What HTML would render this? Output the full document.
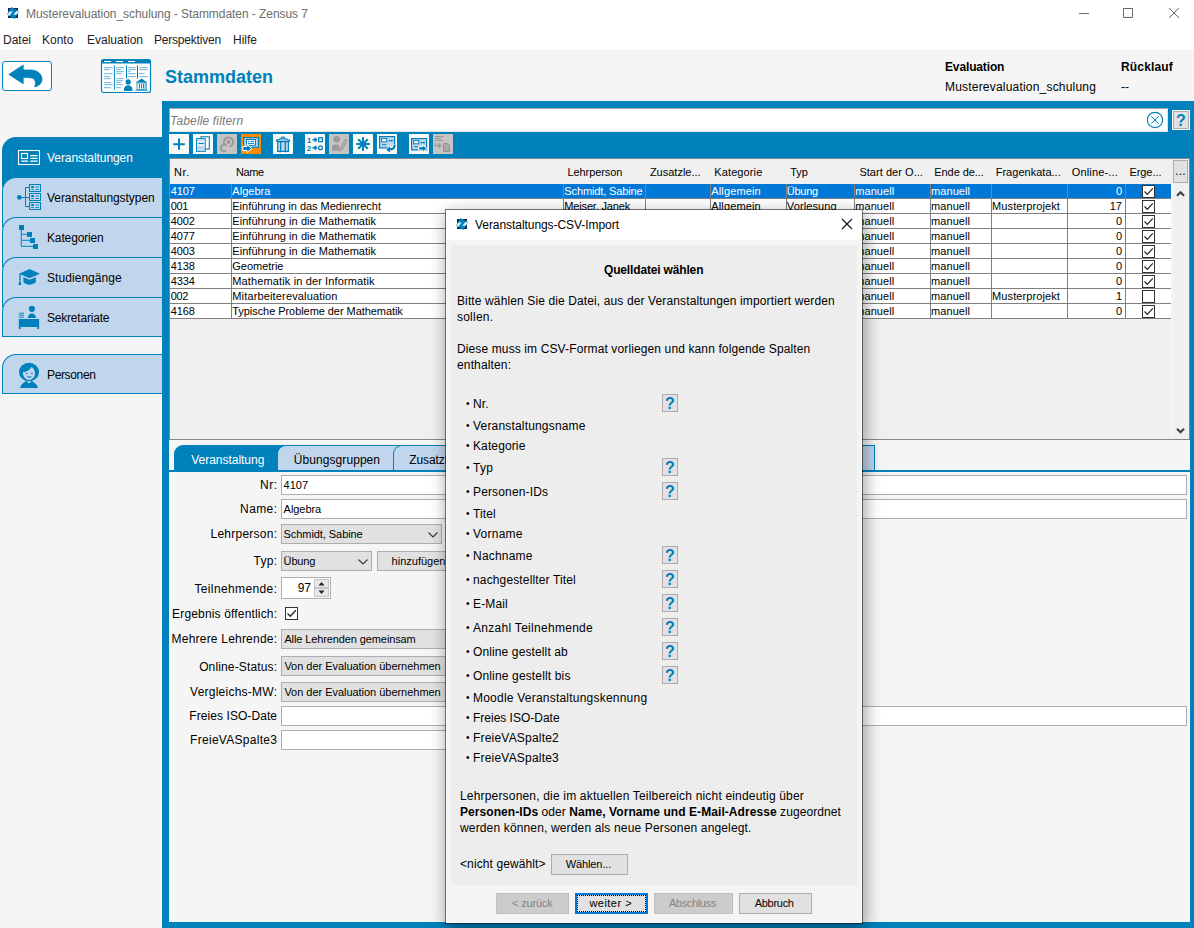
<!DOCTYPE html>
<html lang="de"><head><meta charset="utf-8"><title>Musterevaluation_schulung - Stammdaten - Zensus 7</title>
<style>
*{box-sizing:border-box;margin:0;padding:0}
html,body{width:1194px;height:928px;overflow:hidden;background:#f5f5f5;font-family:"Liberation Sans",sans-serif;font-size:12px;color:#000}
#app{position:relative;width:1194px;height:928px;overflow:hidden}
.t{position:absolute;white-space:nowrap;line-height:14px}
#titlebar{left:0;top:0;width:1194px;height:50px;background:#fff}
.menu{top:33px;font-size:12px;color:#222}
.ltab{position:absolute;left:2px;width:160px;height:41px;background:#c0d6ed;border:1px solid #0081bb;border-right:none;border-radius:14px 0 0 0}
.ltab.act{background:#0081bb}
.ltab .t{left:44px;top:13px;font-size:12px}
.ltab.act .t{color:#fff}
.ltab svg{position:absolute}
#blue{position:absolute;left:162px;top:101px;width:1032px;height:827px;background:#0081bb}
.ibtn{position:absolute;top:134px;width:20px;height:20px;background:#f8f8f8}
.ibtn.dis{background:#c6c4c2}
.ibtn.or{background:#ff8c00}
.ibtn svg{position:absolute;left:0;top:0}
#tbl{position:absolute;left:169px;top:158px;width:1021px;height:282px;background:#f0f0f0;border:1px solid #828790}
.th{position:absolute;top:166px;font-size:11px;line-height:13px;white-space:nowrap}
.row{position:absolute;left:170px;width:1001px;height:15px;background:#fff;border-bottom:1px solid #808080;font-size:11px}
.row.sel{background:#0078d7;color:#fff}
.row i{position:absolute;top:0;height:14px;width:1px;background:#808080}
.row b{position:absolute;top:0;font-weight:normal;line-height:14px;white-space:nowrap}
.cb{position:absolute;width:13px;height:13px;background:#fff;border:1px solid #333}
.cb svg{position:absolute;left:-1px;top:-1px}
#lower{position:absolute;left:169px;top:440px;width:1021px;height:482px;background:#f5f5f5}
.stab{position:absolute;top:445px;height:25px;padding-left:3px;background:#c0d6ed;border:1px solid #0081bb;border-bottom:none;border-radius:9px 0 0 0;font-size:12px;line-height:28px;white-space:nowrap}
.stab.act{background:#0081bb;color:#fff}
.lab{position:absolute;right:917px;font-size:12px;line-height:14px;white-space:nowrap}
.inp{position:absolute;left:281px;height:19px;background:#fff;border:1px solid #abadb3;font-size:11px;line-height:17px;padding-left:2px;white-space:nowrap}
.sel2{position:absolute;left:281px;height:19px;background:#e1e1e1;border:1px solid #adadad;font-size:11px;line-height:17px;padding-left:3px;white-space:nowrap}
.sel2 svg{position:absolute;right:2px;top:6px}
#dlg{position:absolute;left:445px;top:209px;width:418px;height:715px;background:#f4f4f4;border:1px solid rgba(0,0,0,.5);background-clip:padding-box;box-shadow:2px 5px 15px 1px rgba(0,0,0,.36),inset 0 0 0 1px #fdfdfd}
#dlg .tb{position:absolute;left:0;top:0;width:416px;height:30px;background:#fff}
#dlg .in{position:absolute;left:5px;top:35px;width:406px;height:640px;background:#ededed}
.d{position:absolute;white-space:nowrap;font-size:12px;line-height:16px;letter-spacing:.12px}
.q{position:absolute;left:662px;width:16px;height:18px;background:#e1e1e1;border:1px solid #adadad;color:#0081bb;font-weight:bold;font-size:16px;line-height:17px;text-align:center}
.btn{position:absolute;height:21px;background:#e1e1e1;border:1px solid #adadad;font-size:11.5px;line-height:19px;text-align:center;white-space:nowrap}
.btn.dis{background:#cccccc;border-color:#bfbfbf;color:#838383}

</style></head><body><div id="app">
<div id="titlebar" class="t"></div>
<svg class="t" style="left:6px;top:6px" width="14" height="14" viewBox="-1 -1 14 14"><rect x="1" y="1" width="10" height="10" fill="#0c2f5e"/><path d="M4.300 -0.100L11.900 4.400L7.400 11.900L0.100 7.400z" fill="#0081bb"/><path d="M1.900 4.850L5.700 4.200L2.200 8.900L0.800 8.100z" fill="#e4f1fa"/><path d="M10.200 3.200L11.300 5.400L9.400 7.700L6.200 7.800z" fill="#e4f1fa"/></svg>
<div class="t" style="left:26px;top:7px;font-size:12px;color:#6d6d6d;letter-spacing:-.06px">Musterevaluation_schulung - Stammdaten - Zensus 7</div>
<svg class="t" style="left:1070px;top:0" width="124" height="30" viewBox="0 0 124 30"><path d="M9 13.5h10M53.500 8.500h9v9h-9zM99 8l10 10M109 8l-10 10" stroke="#666" stroke-width="1" fill="none"/></svg>
<div class="t menu" style="left:3px;letter-spacing:0px">Datei</div>
<div class="t menu" style="left:42px;letter-spacing:0px">Konto</div>
<div class="t menu" style="left:87px;letter-spacing:0px">Evaluation</div>
<div class="t menu" style="left:154px;letter-spacing:-0.2px">Perspektiven</div>
<div class="t menu" style="left:233px;letter-spacing:0px">Hilfe</div>
<div class="t" style="left:2px;top:61px;width:50px;height:30px;background:#fff;border:1.5px solid #0081bb;border-radius:3px"></div>
<svg class="t" style="left:2px;top:61px" width="50" height="30" viewBox="0 0 50 30"><path d="M6.800 13.400L21.200 4V9H29C35 9 40 13 40 18.200C40 22.500 36.500 25.200 32.500 25.700C33.800 23.500 34 21 32.500 18.600C31 16.800 28 16.400 21.200 16.400V22.800z" fill="#0081bb" stroke="#0081bb" stroke-width=".8" stroke-linejoin="round"/></svg>
<svg class="t" style="left:100px;top:58px" width="52" height="36" viewBox="-1 -1 52 36"><rect x="0.5" y="0.5" width="49" height="33" rx="2" fill="#fff" stroke="#0081bb" stroke-width="1.2"/><path d="M0.5 4.4V2.2Q0.5 0.5 2.2 0.5H47.8Q49.5 0.5 49.5 2.2V4.4z" fill="#0081bb"/><path d="M3 2.5h7M15 2.5h7M27 2.5h7" stroke="#fff" stroke-width="1"/><path d="M13.4 6.3V30.7M25.5 6.3V19.6M36.5 6.3V19.6" stroke="#0081bb" stroke-width="1"/><path d="M3 8.7H11.7M3 10.7H8.7M3 14.7H11.7M3 17.6H8.7M3 19.7H9.8M3 23.6H9.8M3 25.7H11.7M3 28.7H9.8M15.2 8.7H22.8M15.2 10.7H19.8M15.2 12.7H22.8M15.2 14.7H20.7M15.2 19.7H22.8M15.2 21.7H21.7M15.2 23.6H19.8M15.2 25.7H21.7M15.2 28.7H19.8M27.2 8.7H34.7M27.2 10.7H34.7M27.2 12.7H29.7M27.2 14.7H34.7M27.2 17.6H34.7M38.2 8.7H46.7M38.2 10.7H46.7M38.2 14.7H43.7M38.2 17.6H46.7" stroke="#5aa9d3" stroke-width="0.9"/><circle cx="27.2" cy="22.9" r="2.6" fill="#0081bb"/><path d="M23 32v-1.5a4.2 4.2 0 0 1 8.4 0V32z" fill="#0081bb"/><path d="M34.8 23.6L40.6 19.6L46.4 23.6z" fill="#0081bb"/><rect x="36" y="24" width="9.5" height="6.5" fill="#fff" stroke="#0081bb" stroke-width="0.8"/><rect x="43.5" y="24" width="2.2" height="7" fill="#7bb9dc"/><path d="M38.5 25v4.5M40.5 25v4.5M42.5 25v4.5" stroke="#0081bb" stroke-width="1"/><path d="M34.5 31.5H47" stroke="#5aa9d3" stroke-width="1"/></svg>
<div class="t" style="left:165px;top:66px;font-size:18px;line-height:22px;font-weight:bold;color:#0081bb">Stammdaten</div>
<div class="t" style="left:945px;top:60px;font-weight:bold;letter-spacing:-0.14px">Evaluation</div>
<div class="t" style="left:945px;top:80px;letter-spacing:.2px">Musterevaluation_schulung</div>
<div class="t" style="left:1121px;top:60px;font-weight:bold;letter-spacing:0.16px">Rücklauf</div>
<div class="t" style="left:1121px;top:80px">--</div>
<div id="blue"></div>
<div class="ltab" style="top:354px;height:40px"><svg style="left:15.0px;top:7.0px" width="22" height="27" viewBox="18 362 22 27"><ellipse cx="29" cy="372" rx="10" ry="9.3" fill="#0081bb"/><path d="M23 372c3 0 7-2 8.5-5c2 1 3.500 3.500 3.500 6.500a6 6.500 0 0 1-12 0z" fill="#c0d6ed"/><circle cx="26.700" cy="373.500" r=".8" fill="#0081bb"/><circle cx="32" cy="373.500" r=".8" fill="#0081bb"/><path d="M26.500 376.500q2.800 2.500 5.600 0z" fill="#0081bb"/><path d="M20 388c1-4 4-6 6.500-7l2.500 2.500l2.500-2.500c2.500 1 5.500 3 6.500 7z" fill="#0081bb"/></svg><div class="t" style="letter-spacing:-0.35px">Personen</div></div>
<div class="ltab act" style="top:137px;height:50px"><svg style="left:14.0px;top:11.0px" width="24" height="17" viewBox="17 149 24 17"><rect x="18.500" y="150.500" width="21" height="14" fill="none" stroke="#fff" stroke-width="1.100"/><rect x="21.500" y="153.500" width="6" height="5" fill="none" stroke="#fff" stroke-width="1.200"/><path d="M21.300 161.200H28.200M30.300 155.600H37.600M30.300 158.400H37.600M30.300 161.200H37.600" stroke="#fff" stroke-width="1.300"/></svg><div class="t" style="letter-spacing:-0.06px">Veranstaltungen</div></div>
<div class="ltab" style="top:177px;height:50px"><svg style="left:13.0px;top:4.0px" width="28" height="30" viewBox="16 182 28 30"><circle cx="19.300" cy="197.400" r="2.300" fill="#0081bb"/><path d="M19 197.500H29.500M29.500 187.500H25.500V206.500H29.500" fill="none" stroke="#0081bb" stroke-width="1"/><rect x="29.5" y="184.5" width="11" height="7" fill="none" stroke="#0081bb" stroke-width="1"/><rect x="31.2" y="186.0" width="2.800" height="2" fill="#0081bb"/><path d="M31.2 189.5h2.800M35.5 187.1h3.400M35.5 189.5h3.400" stroke="#0081bb" stroke-width=".9"/><rect x="29.5" y="193.5" width="11" height="7" fill="none" stroke="#0081bb" stroke-width="1"/><rect x="31.2" y="195.0" width="2.800" height="2" fill="#0081bb"/><path d="M31.2 198.5h2.800M35.5 196.1h3.400M35.5 198.5h3.400" stroke="#0081bb" stroke-width=".9"/><rect x="29.5" y="202.5" width="11" height="7" fill="none" stroke="#0081bb" stroke-width="1"/><rect x="31.2" y="204.0" width="2.800" height="2" fill="#0081bb"/><path d="M31.2 207.5h2.800M35.5 205.1h3.400M35.5 207.5h3.400" stroke="#0081bb" stroke-width=".9"/></svg><div class="t" style="letter-spacing:-0.06px">Veranstaltungstypen</div></div>
<div class="ltab" style="top:217px;height:50px"><svg style="left:15.0px;top:5.0px" width="24" height="28" viewBox="18 223 24 28"><path d="M21.300 229V246.300H34M21.300 234.300H28M21.300 240.300H31" fill="none" stroke="#0081bb" stroke-width="1"/><rect x="19" y="225" width="5" height="5" fill="#0081bb"/><rect x="27" y="232" width="5" height="5" fill="#0081bb"/><rect x="30" y="238" width="5" height="5" fill="#0081bb"/><rect x="33" y="244" width="5" height="5" fill="#0081bb"/></svg><div class="t" style="letter-spacing:-0.14px">Kategorien</div></div>
<div class="ltab" style="top:257px;height:50px"><svg style="left:15.0px;top:9.0px" width="24" height="20" viewBox="18 267 24 20"><path d="M19 273.800L29.500 269L40 273.800L29.500 278.200z" fill="#0081bb"/><path d="M23.400 277.200L29.500 279.800L35.900 277.200V282c-2 1.800-4 2.700-6.400 2.700s-4.400-.9-6.100-2.700z" fill="#0081bb"/><path d="M20 274v6" stroke="#0081bb" stroke-width="1.300"/><path d="M20 278.500l1.400 6.500h-3z" fill="#0081bb"/></svg><div class="t" style="letter-spacing:0.06px">Studiengänge</div></div>
<div class="ltab" style="top:297px;height:40px"><svg style="left:15.0px;top:6.0px" width="24" height="26" viewBox="18 304 24 26"><circle cx="31.900" cy="308.800" r="3.100" fill="#0081bb"/><path d="M27.900 318a4 4.600 0 0 1 8 0z" fill="#0081bb"/><path d="M18.800 318.900H39.100V328.900H37.300V327H20.600V328.900H18.800z" fill="#0081bb"/><path d="M18.800 313.200H24M18.800 315.200H24M18.800 317.200H24" stroke="#0081bb" stroke-width=".9"/></svg><div class="t" style="letter-spacing:-0.2px">Sekretariate</div></div>
<div class="t" style="left:169px;top:108px;width:999px;height:24px;background:#fff;border:1px solid #e6e2e0;border-top-color:#aaa6a4;border-left-color:#aaa6a4"></div>
<div class="t" style="left:170px;top:114px;font-style:italic;color:#7a7a7a;font-size:12px;letter-spacing:.16px">Tabelle filtern</div>
<svg class="t" style="left:1145px;top:110px" width="20" height="20" viewBox="0 0 20 20"><circle cx="10" cy="10" r="7.600" fill="none" stroke="#0081bb" stroke-width="1.200"/><path d="M6.300 6.300l7.400 7.400M13.700 6.300l-7.400 7.400" stroke="#0081bb" stroke-width="1"/></svg>
<div class="t" style="left:1172px;top:110px;width:18px;height:20px;background:#adadad;border:1px solid #fbfbfb"></div><div class="t" style="left:1174px;top:112px;width:14px;height:16px;background:#e1e1e1;color:#0081bb;font-weight:bold;font-size:16px;line-height:17px;text-align:center">?</div>
<div class="ibtn " style="left:169px"><svg width="20" height="20" viewBox="0 0 20 20"><path d="M10 4.400V15.800M4.200 10.200H15.800" stroke="#0081bb" stroke-width="2" fill="none"/></svg></div>
<div class="ibtn " style="left:193px"><svg width="20" height="20" viewBox="0 0 20 20"><rect x="8" y="2.800" width="8.300" height="12.200" fill="#fff" stroke="#0081bb" stroke-width="1.100"/><rect x="3.600" y="4.700" width="8.600" height="12.600" fill="#fff" stroke="#0081bb" stroke-width="1.100"/><rect x="4.200" y="5.300" width="7.400" height="1.900" fill="#c0d6ed"/><rect x="4.200" y="11.700" width="7.400" height="5" fill="#c0d6ed"/><path d="M5.300 9.500H10.800" stroke="#0081bb" stroke-width="1.300"/></svg></div>
<div class="ibtn dis" style="left:217px"><svg width="20" height="20" viewBox="0 0 20 20"><path d="M7.500 10.200A4.600 4.600 0 1 1 12.500 12.500" fill="none" stroke="#9a9a9a" stroke-width="1.900"/><circle cx="11.500" cy="8" r="2" fill="#9a9a9a"/><path d="M9.450 11.940A3.200 3.200 0 1 0 9.060 16.450" fill="none" stroke="#9a9a9a" stroke-width="1.900"/></svg></div>
<div class="ibtn or" style="left:241px"><svg width="20" height="20" viewBox="0 0 20 20"><rect x="2.700" y="3.600" width="14.700" height="9.800" fill="#c0d6ed" stroke="#0081bb" stroke-width="1.200"/><rect x="5.500" y="5.500" width="9" height="5.800" fill="#fff" stroke="#0081bb" stroke-width="1"/><path d="M7 7.400h1.500M9.600 7.400h3.600M7 9.400h6.200" stroke="#0081bb" stroke-width="1"/><path d="M1.800 12.500H6V10.300L10.800 14.500L6 18.700V16.500H1.800z" fill="#0081bb" stroke="#fff" stroke-width="1"/></svg></div>
<div class="ibtn " style="left:273px"><svg width="20" height="20" viewBox="0 0 20 20"><path d="M7.700 4.700Q10 0.700 12.300 4.700" fill="none" stroke="#0081bb" stroke-width="1.100"/><path d="M3.500 7.300V6.300Q10 2.800 16.500 6.300V7.300z" fill="#c0d6ed" stroke="#0081bb" stroke-width="1.100"/><path d="M4.700 7.600H15.400V17.300H4.700z" fill="#c0d6ed" stroke="#0081bb" stroke-width="1.200"/><path d="M7.700 7.600V17.300M12.300 7.600V17.300" stroke="#0081bb" stroke-width="1.300"/><path d="M7 17.900v.6M13 17.900v.6" stroke="#0081bb" stroke-width="1"/></svg></div>
<div class="ibtn " style="left:305px"><svg width="20" height="20" viewBox="0 0 20 20"><text x="1.800" y="8.700" font-family="Liberation Sans,sans-serif" font-size="8" font-weight="bold" fill="#0081bb">1</text><text x="1.800" y="16.700" font-family="Liberation Sans,sans-serif" font-size="8" font-weight="bold" fill="#0081bb">2</text><path d="M7.400 5.700h4m-1.800-2l2 2l-2 2M7.400 13.700h4m-1.800-2l2 2l-2 2" fill="none" stroke="#0081bb" stroke-width="1.400"/><rect x="13.600" y="3.800" width="3.800" height="3.800" fill="none" stroke="#0081bb" stroke-width="1.300"/><circle cx="15.500" cy="13.700" r="1.900" fill="none" stroke="#0081bb" stroke-width="1.300"/></svg></div>
<div class="ibtn dis" style="left:329px"><svg width="20" height="20" viewBox="0 0 20 20"><circle cx="7.600" cy="5.200" r="3.300" fill="#9a9a9a"/><path d="M3 16.700V13.500a3.300 3.300 0 0 1 3.300-3.100H8a2.800 2.800 0 0 1 2.600 2.800V16.700z" fill="#9a9a9a"/><path d="M11 17L11.700 14L16 5.300L18 6.300L13.700 15.200z" fill="#b4b4b4" stroke="#9a9a9a" stroke-width="1"/></svg></div>
<div class="ibtn " style="left:353px"><svg width="20" height="20" viewBox="0 0 20 20"><path d="M10 3.300V16.700M3.200 10H16.900M5.200 5.200L14.800 14.800M14.800 5.200L5.200 14.800" stroke="#0081bb" stroke-width="2" fill="none"/></svg></div>
<div class="ibtn " style="left:377px"><svg width="20" height="20" viewBox="0 0 20 20"><rect x="2.600" y="2.6" width="15" height="11.300" fill="#c0d6ed" stroke="#0081bb" stroke-width="1.200"/><rect x="4.600" y="4.6" width="5.200" height="3.200" fill="#fff" stroke="#0081bb" stroke-width="1"/><path d="M11.700 6.6h4.300M5 10.799999999999999h4.500" stroke="#0081bb" stroke-width="1.100"/><path d="M17.500 10.500V11.500a3.600 3.600 0 0 1-3.600 3.600H12.500" fill="none" stroke="#fff" stroke-width="4.200"/><path d="M13.300 11.500L8 15.400L13.300 19.300z" fill="#fff"/><path d="M17.500 10.700V11.700a3.400 3.400 0 0 1-3.400 3.400H12.500" fill="none" stroke="#0081bb" stroke-width="2.200"/><path d="M13 12.400L9 15.400L13 18.400z" fill="#0081bb"/></svg></div>
<div class="ibtn " style="left:409px"><svg width="20" height="20" viewBox="0 0 20 20"><rect x="2.600" y="4.6" width="15" height="11.300" fill="#c0d6ed" stroke="#0081bb" stroke-width="1.200"/><rect x="4.600" y="6.6" width="5.200" height="3.200" fill="#fff" stroke="#0081bb" stroke-width="1"/><path d="M11.700 8.6h4.300M5 12.799999999999999h4.500" stroke="#0081bb" stroke-width="1.100"/><path d="M9.700 12.700H13.700V11L18 14.500L13.700 18V16.200H9.700z" fill="#0081bb" stroke="#fff" stroke-width="1"/></svg></div>
<div class="ibtn dis" style="left:433px"><svg width="20" height="20" viewBox="0 0 20 20"><path d="M1.800 2.500H10.900M1.800 4.500H8M1.800 6.500H10" stroke="#9a9a9a" stroke-width="1"/><path d="M2.300 9V11.500H7.500m-2-2l2.200 2l-2.200 2" fill="none" stroke="#9a9a9a" stroke-width="1.300"/><path d="M10.500 9.600H14.500L16.500 11.600V17.400H10.500z" fill="#aaa" stroke="#8e8e8e" stroke-width="1"/></svg></div>
<div id="tbl"></div>
<div class="th" style="left:173.9px;letter-spacing:0.62px">Nr.</div>
<div class="th" style="left:235.9px;letter-spacing:-0.38px">Name</div>
<div class="th" style="left:567.5px;letter-spacing:-0.08px">Lehrperson</div>
<div class="th" style="left:649.9px;letter-spacing:-0.0px">Zusatzle...</div>
<div class="th" style="left:714.3px;letter-spacing:0.11px">Kategorie</div>
<div class="th" style="left:790.3px;letter-spacing:-0.07px">Typ</div>
<div class="th" style="left:859.4px;letter-spacing:0.04px">Start der O...</div>
<div class="th" style="left:934.3px;letter-spacing:-0.08px">Ende de...</div>
<div class="th" style="left:995.7px;letter-spacing:0.02px">Fragenkata...</div>
<div class="th" style="left:1071.8px;letter-spacing:0.14px">Online-...</div>
<div class="th" style="left:1129.4px;letter-spacing:-0.05px">Erge...</div>
<div class="t" style="left:1173px;top:160px;width:15px;height:23px;background:#e1e1e1;border:1px solid #adadad;font-size:12px;line-height:20px;text-align:center;letter-spacing:.3px">...</div>
<div class="row sel" style="top:184px"><i style="left:61px"></i><i style="left:393px"></i><i style="left:475px"></i><i style="left:540px"></i><i style="left:616px"></i><i style="left:684px"></i><i style="left:760px"></i><i style="left:821px"></i><i style="left:897px"></i><i style="left:955px"></i><b style="left:0.7px;letter-spacing:-0.12px">4107</b><b style="left:62.3px;letter-spacing:0.03px">Algebra</b><b style="left:394.3px;letter-spacing:-0.12px">Schmidt, Sabine</b><b style="left:541.3px;letter-spacing:0.14px">Allgemein</b><b style="left:616.8px;letter-spacing:-0.25px">Übung</b><b style="left:685.2px;letter-spacing:0.08px">manuell</b><b style="left:761.0px;letter-spacing:0.08px">manuell</b><b style="right:49px">0</b><span class="cb" style="left:972px;top:1px"><svg width="13" height="13" viewBox="0 0 13 13"><path d="M2.500 6.500L5.300 9.300L10.800 3.300" fill="none" stroke="#222" stroke-width="1.200"/></svg></span></div>
<div class="row" style="top:199px"><i style="left:61px"></i><i style="left:393px"></i><i style="left:475px"></i><i style="left:540px"></i><i style="left:616px"></i><i style="left:684px"></i><i style="left:760px"></i><i style="left:821px"></i><i style="left:897px"></i><i style="left:955px"></i><b style="left:0.7px;letter-spacing:-0.28px">001</b><b style="left:62.3px;letter-spacing:-0.02px">Einführung in das Medienrecht</b><b style="left:394.3px;letter-spacing:-0.16px">Meiser, Janek</b><b style="left:541.3px;letter-spacing:0.14px">Allgemein</b><b style="left:616.8px;letter-spacing:0.12px">Vorlesung</b><b style="left:685.2px;letter-spacing:0.08px">manuell</b><b style="left:761.0px;letter-spacing:0.08px">manuell</b><b style="left:822.1px;letter-spacing:0.1px">Musterprojekt</b><b style="right:49px">17</b><span class="cb" style="left:972px;top:1px"><svg width="13" height="13" viewBox="0 0 13 13"><path d="M2.500 6.500L5.300 9.300L10.800 3.300" fill="none" stroke="#222" stroke-width="1.200"/></svg></span></div>
<div class="row" style="top:214px"><i style="left:61px"></i><i style="left:393px"></i><i style="left:475px"></i><i style="left:540px"></i><i style="left:616px"></i><i style="left:684px"></i><i style="left:760px"></i><i style="left:821px"></i><i style="left:897px"></i><i style="left:955px"></i><b style="left:0.7px;letter-spacing:-0.12px">4002</b><b style="left:62.3px;letter-spacing:0.05px">Einführung in die Mathematik</b><b style="left:685.2px;letter-spacing:0.08px">manuell</b><b style="left:761.0px;letter-spacing:0.08px">manuell</b><b style="right:49px">0</b><span class="cb" style="left:972px;top:1px"><svg width="13" height="13" viewBox="0 0 13 13"><path d="M2.500 6.500L5.300 9.300L10.800 3.300" fill="none" stroke="#222" stroke-width="1.200"/></svg></span></div>
<div class="row" style="top:229px"><i style="left:61px"></i><i style="left:393px"></i><i style="left:475px"></i><i style="left:540px"></i><i style="left:616px"></i><i style="left:684px"></i><i style="left:760px"></i><i style="left:821px"></i><i style="left:897px"></i><i style="left:955px"></i><b style="left:0.7px;letter-spacing:-0.12px">4077</b><b style="left:62.3px;letter-spacing:0.05px">Einführung in die Mathematik</b><b style="left:685.2px;letter-spacing:0.08px">manuell</b><b style="left:761.0px;letter-spacing:0.08px">manuell</b><b style="right:49px">0</b><span class="cb" style="left:972px;top:1px"><svg width="13" height="13" viewBox="0 0 13 13"><path d="M2.500 6.500L5.300 9.300L10.800 3.300" fill="none" stroke="#222" stroke-width="1.200"/></svg></span></div>
<div class="row" style="top:244px"><i style="left:61px"></i><i style="left:393px"></i><i style="left:475px"></i><i style="left:540px"></i><i style="left:616px"></i><i style="left:684px"></i><i style="left:760px"></i><i style="left:821px"></i><i style="left:897px"></i><i style="left:955px"></i><b style="left:0.7px;letter-spacing:-0.12px">4003</b><b style="left:62.3px;letter-spacing:0.05px">Einführung in die Mathematik</b><b style="left:685.2px;letter-spacing:0.08px">manuell</b><b style="left:761.0px;letter-spacing:0.08px">manuell</b><b style="right:49px">0</b><span class="cb" style="left:972px;top:1px"><svg width="13" height="13" viewBox="0 0 13 13"><path d="M2.500 6.500L5.300 9.300L10.800 3.300" fill="none" stroke="#222" stroke-width="1.200"/></svg></span></div>
<div class="row" style="top:259px"><i style="left:61px"></i><i style="left:393px"></i><i style="left:475px"></i><i style="left:540px"></i><i style="left:616px"></i><i style="left:684px"></i><i style="left:760px"></i><i style="left:821px"></i><i style="left:897px"></i><i style="left:955px"></i><b style="left:0.7px;letter-spacing:-0.12px">4138</b><b style="left:62.3px;letter-spacing:-0.02px">Geometrie</b><b style="left:685.2px;letter-spacing:0.08px">manuell</b><b style="left:761.0px;letter-spacing:0.08px">manuell</b><b style="right:49px">0</b><span class="cb" style="left:972px;top:1px"><svg width="13" height="13" viewBox="0 0 13 13"><path d="M2.500 6.500L5.300 9.300L10.800 3.300" fill="none" stroke="#222" stroke-width="1.200"/></svg></span></div>
<div class="row" style="top:274px"><i style="left:61px"></i><i style="left:393px"></i><i style="left:475px"></i><i style="left:540px"></i><i style="left:616px"></i><i style="left:684px"></i><i style="left:760px"></i><i style="left:821px"></i><i style="left:897px"></i><i style="left:955px"></i><b style="left:0.7px;letter-spacing:-0.12px">4334</b><b style="left:62.3px;letter-spacing:0.13px">Mathematik in der Informatik</b><b style="left:685.2px;letter-spacing:0.08px">manuell</b><b style="left:761.0px;letter-spacing:0.08px">manuell</b><b style="right:49px">0</b><span class="cb" style="left:972px;top:1px"><svg width="13" height="13" viewBox="0 0 13 13"><path d="M2.500 6.500L5.300 9.300L10.800 3.300" fill="none" stroke="#222" stroke-width="1.200"/></svg></span></div>
<div class="row" style="top:289px"><i style="left:61px"></i><i style="left:393px"></i><i style="left:475px"></i><i style="left:540px"></i><i style="left:616px"></i><i style="left:684px"></i><i style="left:760px"></i><i style="left:821px"></i><i style="left:897px"></i><i style="left:955px"></i><b style="left:0.7px;letter-spacing:-0.28px">002</b><b style="left:62.3px;letter-spacing:0.15px">Mitarbeiterevaluation</b><b style="left:685.2px;letter-spacing:0.08px">manuell</b><b style="left:761.0px;letter-spacing:0.08px">manuell</b><b style="left:822.1px;letter-spacing:0.1px">Musterprojekt</b><b style="right:49px">1</b><span class="cb" style="left:972px;top:1px"></span></div>
<div class="row" style="top:304px"><i style="left:61px"></i><i style="left:393px"></i><i style="left:475px"></i><i style="left:540px"></i><i style="left:616px"></i><i style="left:684px"></i><i style="left:760px"></i><i style="left:821px"></i><i style="left:897px"></i><i style="left:955px"></i><b style="left:0.7px;letter-spacing:-0.12px">4168</b><b style="left:62.3px;letter-spacing:-0.06px">Typische Probleme der Mathematik</b><b style="left:685.2px;letter-spacing:0.08px">manuell</b><b style="left:761.0px;letter-spacing:0.08px">manuell</b><b style="right:49px">0</b><span class="cb" style="left:972px;top:1px"><svg width="13" height="13" viewBox="0 0 13 13"><path d="M2.500 6.500L5.300 9.300L10.800 3.300" fill="none" stroke="#222" stroke-width="1.200"/></svg></span></div>
<div class="t" style="left:1172px;top:184px;width:17px;height:255px;background:#f0f0f0"></div>
<svg class="t" style="left:1172px;top:184px" width="17" height="255" viewBox="0 0 17 255"><path d="M0.500 0V255" stroke="#fafafa" stroke-width="1"/><path d="M5 11.800L8.500 8.300L12 11.800M5 244.800L8.500 248.300L12 244.800" fill="none" stroke="#404040" stroke-width="2.100"/></svg>
<div id="lower"></div>
<div class="stab act" style="left:174px;width:118px"><span style="position:absolute;left:16.2px;top:0;letter-spacing:-0.02px">Veranstaltung</span></div>
<div class="stab" style="left:277px;width:130px"><span style="position:absolute;left:15.8px;top:0;letter-spacing:0.07px">Übungsgruppen</span></div>
<div class="stab" style="left:393px;width:126px"><span style="position:absolute;left:15.3px;top:0;letter-spacing:-0.09px">Zusatzlehrende</span></div>
<div class="stab" style="left:505px;width:139px"><span style="position:absolute;left:18.8px;top:0;letter-spacing:0.12px">Teilnehmende</span></div>
<div class="stab" style="left:630px;width:144px"><span style="position:absolute;left:18.8px;top:0;letter-spacing:0.1px">Online-Umfrage</span></div>
<div class="stab" style="left:760px;width:115px"><span style="position:absolute;left:23.8px;top:0;letter-spacing:-0.0px">Zusatzdaten</span></div>
<div class="t" style="left:169px;top:470px;width:1021px;height:2px;background:#0081bb"></div>
<div class="lab" style="top:478px;letter-spacing:0.45px;margin-right:-0.45px">Nr:</div>
<div class="inp" style="top:475px;width:906px;height:20px;line-height:18px"><span style="position:absolute;left:1.6px;top:0;letter-spacing:0.01px">4107</span></div>
<div class="lab" style="top:502px;letter-spacing:0.39px;margin-right:-0.39px">Name:</div>
<div class="inp" style="top:499px;width:906px;height:20px;line-height:18px"><span style="position:absolute;left:1.6px;top:0;letter-spacing:-0.05px">Algebra</span></div>
<div class="lab" style="top:527px;letter-spacing:0.24px;margin-right:-0.24px">Lehrperson:</div>
<div class="sel2" style="top:524px;width:161px;height:20px;line-height:18px"><span style="position:absolute;left:1.6px;top:0;letter-spacing:-0.07px">Schmidt, Sabine</span><svg width="12" height="8" viewBox="0 0 12 8"><path d="M1.500 1.500L6 6L10.500 1.500" fill="none" stroke="#3a3a3a" stroke-width="1.200"/></svg></div>
<div class="lab" style="top:554px;letter-spacing:0.27px;margin-right:-0.27px">Typ:</div>
<div class="sel2" style="top:551px;width:91px;height:20px;line-height:18px"><span style="position:absolute;left:1.6px;top:0;letter-spacing:-0.15px">Übung</span><svg width="12" height="8" viewBox="0 0 12 8"><path d="M1.500 1.500L6 6L10.500 1.500" fill="none" stroke="#3a3a3a" stroke-width="1.200"/></svg></div>
<div class="sel2" style="left:377px;top:551px;width:90px;height:20px;line-height:18px"><span style="position:absolute;left:13.600px;top:0;letter-spacing:0">hinzufügen</span></div>
<div class="lab" style="top:582px;letter-spacing:0.38px;margin-right:-0.38px">Teilnehmende:</div>
<div class="inp" style="top:577px;width:50px;height:22px;line-height:20px;padding:0 19px 0 0;text-align:right;font-size:12px">97</div>
<div class="t" style="left:314px;top:579px;width:15px;height:9px;background:#e8e8e8;border:1px solid #c4c4c4"></div><div class="t" style="left:314px;top:588px;width:15px;height:9px;background:#e8e8e8;border:1px solid #c4c4c4"></div>
<svg class="t" style="left:314px;top:579px" width="15" height="18" viewBox="0 0 15 18"><path d="M4.500 6.500L7.500 3L10.500 6.500zM4.500 11.500L7.500 15L10.500 11.500z" fill="#222"/></svg>
<div class="lab" style="top:607px;letter-spacing:0.16px;margin-right:-0.16px">Ergebnis öffentlich:</div>
<span class="cb" style="left:285px;top:607px"><svg width="13" height="13" viewBox="0 0 13 13"><path d="M2.500 6.500L5.300 9.300L10.800 3.300" fill="none" stroke="#222" stroke-width="1.300"/></svg></span>
<div class="lab" style="top:632px;letter-spacing:0.21px;margin-right:-0.21px">Mehrere Lehrende:</div>
<div class="sel2" style="top:629px;width:300px;height:20px;line-height:18px"><span style="position:absolute;left:2.4px;top:0;letter-spacing:-0.11px">Alle Lehrenden gemeinsam</span></div>
<div class="lab" style="top:660px;letter-spacing:0.14px;margin-right:-0.14px">Online-Status:</div>
<div class="sel2" style="top:656px;width:300px;height:20px;line-height:18px"><span style="position:absolute;left:2.4px;top:0;letter-spacing:-0.03px">Von der Evaluation übernehmen</span></div>
<div class="lab" style="top:685px;letter-spacing:0.24px;margin-right:-0.24px">Vergleichs-MW:</div>
<div class="sel2" style="top:682px;width:300px;height:20px;line-height:18px"><span style="position:absolute;left:2.4px;top:0;letter-spacing:-0.03px">Von der Evaluation übernehmen</span></div>
<div class="lab" style="top:709px;letter-spacing:0.07px;margin-right:-0.07px">Freies ISO-Date</div>
<div class="inp" style="top:706px;width:906px;height:20px"></div>
<div class="lab" style="top:733px;letter-spacing:0.29px;margin-right:-0.29px">FreieVASpalte3</div>
<div class="inp" style="top:730px;width:300px;height:20px"></div>
<div id="dlg"><div class="tb"></div><div class="in"></div></div>
<svg class="t" style="left:455px;top:217px" width="14" height="14" viewBox="-1 -1 14 14"><rect x="1" y="1" width="10" height="10" fill="#0c2f5e"/><path d="M4.300 -0.100L11.900 4.400L7.400 11.900L0.100 7.400z" fill="#0081bb"/><path d="M1.900 4.850L5.700 4.200L2.200 8.900L0.800 8.100z" fill="#e4f1fa"/><path d="M10.200 3.200L11.300 5.400L9.400 7.700L6.200 7.800z" fill="#e4f1fa"/></svg>
<div class="t" style="left:475px;top:218px;font-size:12px;letter-spacing:-0.06px">Veranstaltungs-CSV-Import</div>
<svg class="t" style="left:840px;top:217px" width="14" height="14" viewBox="0 0 14 14"><path d="M2 2l10 10M12 2L2 12" stroke="#111" stroke-width="1.100"/></svg>
<div class="d" style="left:604px;top:262px;font-weight:bold;letter-spacing:-0.16px">Quelldatei wählen</div>
<div class="d" style="left:457px;top:293px;letter-spacing:0.12px;">Bitte wählen Sie die Datei, aus der Veranstaltungen importiert werden</div>
<div class="d" style="left:457px;top:309px;letter-spacing:0.22px;">sollen.</div>
<div class="d" style="left:457px;top:341px;letter-spacing:0.12px;">Diese muss im CSV-Format vorliegen und kann folgende Spalten</div>
<div class="d" style="left:457px;top:357px;letter-spacing:0.14px;">enthalten:</div>
<div class="d" style="left:466px;top:396px;font-size:10px">•</div>
<div class="d" style="left:473px;top:396px;letter-spacing:0.13px;">Nr.</div>
<div class="q" style="top:394px">?</div>
<div class="d" style="left:466px;top:418px;font-size:10px">•</div>
<div class="d" style="left:473px;top:418px;letter-spacing:0.18px;">Veranstaltungsname</div>
<div class="d" style="left:466px;top:438px;font-size:10px">•</div>
<div class="d" style="left:473px;top:438px;letter-spacing:0.12px;">Kategorie</div>
<div class="d" style="left:466px;top:460px;font-size:10px">•</div>
<div class="d" style="left:473px;top:460px;letter-spacing:0.28px;">Typ</div>
<div class="q" style="top:458px">?</div>
<div class="d" style="left:466px;top:484px;font-size:10px">•</div>
<div class="d" style="left:473px;top:484px;letter-spacing:0.15px;">Personen-IDs</div>
<div class="q" style="top:482px">?</div>
<div class="d" style="left:466px;top:506px;font-size:10px">•</div>
<div class="d" style="left:473px;top:506px;letter-spacing:0.14px;">Titel</div>
<div class="d" style="left:466px;top:526px;font-size:10px">•</div>
<div class="d" style="left:473px;top:526px;letter-spacing:0.25px;">Vorname</div>
<div class="d" style="left:466px;top:548px;font-size:10px">•</div>
<div class="d" style="left:473px;top:548px;letter-spacing:0.21px;">Nachname</div>
<div class="q" style="top:546px">?</div>
<div class="d" style="left:466px;top:572px;font-size:10px">•</div>
<div class="d" style="left:473px;top:572px;letter-spacing:0.14px;">nachgestellter Titel</div>
<div class="q" style="top:570px">?</div>
<div class="d" style="left:466px;top:596px;font-size:10px">•</div>
<div class="d" style="left:473px;top:596px;letter-spacing:0.14px;">E-Mail</div>
<div class="q" style="top:594px">?</div>
<div class="d" style="left:466px;top:620px;font-size:10px">•</div>
<div class="d" style="left:473px;top:620px;letter-spacing:0.29px;">Anzahl Teilnehmende</div>
<div class="q" style="top:618px">?</div>
<div class="d" style="left:466px;top:644px;font-size:10px">•</div>
<div class="d" style="left:473px;top:644px;letter-spacing:0.12px;">Online gestellt ab</div>
<div class="q" style="top:642px">?</div>
<div class="d" style="left:466px;top:668px;font-size:10px">•</div>
<div class="d" style="left:473px;top:668px;letter-spacing:0.15px;">Online gestellt bis</div>
<div class="q" style="top:666px">?</div>
<div class="d" style="left:466px;top:690px;font-size:10px">•</div>
<div class="d" style="left:473px;top:690px;letter-spacing:0.22px;">Moodle Veranstaltungskennung</div>
<div class="d" style="left:466px;top:710px;font-size:10px">•</div>
<div class="d" style="left:473px;top:710px;letter-spacing:-0.01px;">Freies ISO-Date</div>
<div class="d" style="left:466px;top:730px;font-size:10px">•</div>
<div class="d" style="left:473px;top:730px;letter-spacing:0.2px;">FreieVASpalte2</div>
<div class="d" style="left:466px;top:750px;font-size:10px">•</div>
<div class="d" style="left:473px;top:750px;letter-spacing:0.2px;">FreieVASpalte3</div>
<div class="d" style="left:460px;top:788px;letter-spacing:0.18px;">Lehrpersonen, die im aktuellen Teilbereich nicht eindeutig über</div>
<div class="d" style="left:460px;top:804px;letter-spacing:0.07px;"><b>Personen-IDs</b> oder <b>Name, Vorname und E-Mail-Adresse</b> zugeordnet</div>
<div class="d" style="left:460px;top:820px;letter-spacing:0.15px;">werden können, werden als neue Personen angelegt.</div>
<div class="d" style="left:460px;top:856px;letter-spacing:0.1px;">&lt;nicht gewählt&gt;</div>
<div class="btn " style="left:551px;top:854px;width:77px"><span style="position:absolute;left:13.7px;top:0;letter-spacing:-0.1px;font-size:11px">Wählen...</span></div>
<div class="btn dis" style="left:496px;top:893px;width:73px"><span style="position:absolute;left:15px;top:0;letter-spacing:-0.17px;font-size:11px">&lt; zurück</span></div>
<div class="t" style="left:575px;top:893px;width:73px;height:21px;border:1px solid #0078d7;background:#e1e1e1"></div><div class="t" style="left:576px;top:894px;width:71px;height:19px;border:1px solid #0078d7"></div><div class="t" style="left:577px;top:895px;width:69px;height:17px;border:1px dotted #000"></div>
<div class="t" style="left:589.400px;top:896px;font-size:11px;line-height:15px;letter-spacing:0.48px">weiter &gt;</div>
<div class="btn dis" style="left:654px;top:893px;width:79px"><span style="position:absolute;left:14px;top:0;letter-spacing:-0.37px;font-size:11px">Abschluss</span></div>
<div class="btn " style="left:739px;top:893px;width:73px"><span style="position:absolute;left:14.7px;top:0;letter-spacing:-0.28px;font-size:11px">Abbruch</span></div>
</div></body></html>
